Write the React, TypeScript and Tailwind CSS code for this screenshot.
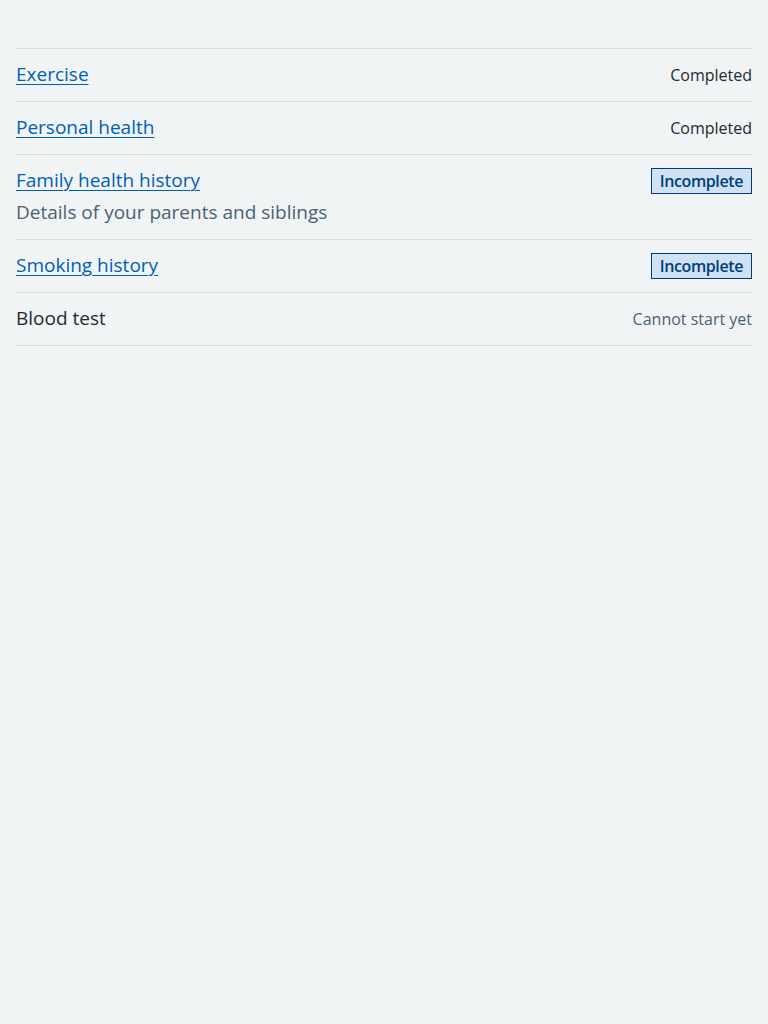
type Task = {
  title: string;
  href?: string;
  hint?: string;
  status: "completed" | "incomplete" | "locked";
};

const tasks: Task[] = [
  { title: "Exercise", href: "#", status: "completed" },
  { title: "Personal health", href: "#", status: "completed" },
  {
    title: "Family health history",
    href: "#",
    hint: "Details of your parents and siblings",
    status: "incomplete",
  },
  { title: "Smoking history", href: "#", status: "incomplete" },
  { title: "Blood test", status: "locked" },
];

function Status({ status }: { status: Task["status"] }) {
  if (status === "incomplete") {
    return (
      <strong className="-mt-px inline-block border border-[#003d78] bg-[#cfe1f2] px-2 py-[4px] text-[16px] leading-4 font-semibold tracking-[-0.4px] text-[#003d78]">
        Incomplete
      </strong>
    );
  }
  if (status === "locked") {
    return <span className="text-[16px] leading-6 text-[#4c6272]">Cannot start yet</span>;
  }
  return <span className="text-[16px] leading-6 text-[#212b32]">Completed</span>;
}

function TaskRow({ task }: { task: Task }) {
  return (
    <li className="flex items-start justify-between gap-4 border-b border-[#d8dde0] pt-[11px] pb-[13px]">
      <div>
        {task.href ? (
          <a
            href={task.href}
            className="text-[19px] leading-7 text-[#005eb8] underline underline-offset-[3px] decoration-1"
          >
            {task.title}
          </a>
        ) : (
          <span className="text-[19px] leading-7 text-[#212b32]">{task.title}</span>
        )}
        {task.hint && (
          <div className="mt-1 text-[19px] leading-7 text-[#4c6272]">{task.hint}</div>
        )}
      </div>
      <div className="pt-[3px] text-right">
        <Status status={task.status} />
      </div>
    </li>
  );
}

export default function App() {
  return (
    <div className="min-h-[1024px] bg-[#f0f4f5] px-4 pt-12 font-['Open_Sans','Noto_Sans',sans-serif]">
      <ul className="border-t border-[#d8dde0]">
        {tasks.map((t) => (
          <TaskRow key={t.title} task={t} />
        ))}
      </ul>
    </div>
  );
}
